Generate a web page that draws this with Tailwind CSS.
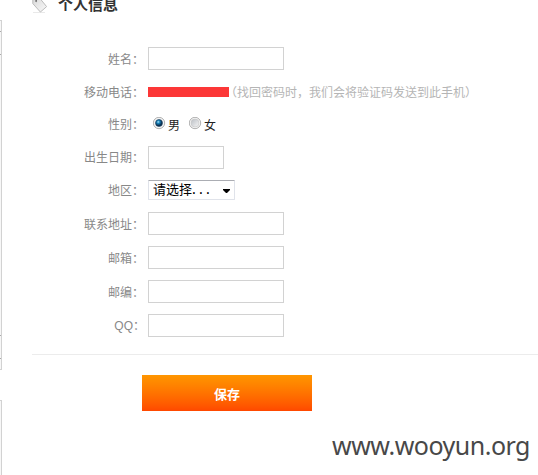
<!DOCTYPE html>
<html lang="zh-CN">
<head>
<meta charset="utf-8">
<title>个人信息</title>
<script src="https://cdn.jsdelivr.net/npm/@tailwindcss/browser@4"></script>
</head>
<body class="bg-white">
<div class="flex w-[538px] h-[475px] overflow-hidden relative font-['Liberation_Sans','Noto_Sans_CJK_SC',sans-serif] text-[12px] leading-[26px] text-[#888]">
  <aside class="w-[2px] shrink-0 pt-[20px] flex flex-col">
    <div class="h-[350px] border-t border-r border-b border-[#d2d2d2] bg-[#f7f7f7] pt-[10px]">
      <div class="h-[24px] border-y border-[#aaa]"></div>
      <div class="h-[280px]"></div>
      <div class="h-[24px] border-y border-[#aaa]"></div>
    </div>
    <div class="mt-[30px] flex-1 border-t border-r border-[#d2d2d2] bg-[#f7f7f7]"></div>
  </aside>
  <main class="ml-[30px] flex-1 flex flex-col">
    <header class="h-[47px] flex items-start">
      <svg class="w-[16px] h-[14px] shrink-0" viewBox="0 0 16 14">
        <defs><linearGradient id="tag" x1="0" y1="0" x2="1" y2="1"><stop offset="0" stop-color="#d8d8d8"/><stop offset="1" stop-color="#fafafa"/></linearGradient></defs>
        <path d="M1 12.500h12" stroke="#e9e9e9"/>
        <path d="M.8-2V3.600L8.400 12 14.600 6.600 8-1.500Z" fill="url(#tag)" stroke="#bcbcbc" stroke-linejoin="round"/>
        <path d="M3-.5Q5 0 3.800 1.800" fill="none" stroke="#555" stroke-width="1.200"/>
      </svg>
      <h1 class="ml-[10px] -mt-[7px] text-[15px] leading-[24px] font-bold text-[#333]">个人信息</h1>
    </header>
    <form class="flex flex-col">
      <div class="flex h-[23px]"><label class="w-[112px] mr-[4px] text-right">姓名：</label><input class="w-[136px] h-[23px] border border-[#d2d2d2] bg-white"></div>
      <div class="flex h-[23px] mt-[10px]"><label class="w-[112px] mr-[4px] text-right">移动电话：</label><span class="mt-[7px] w-[81px] h-[10px] bg-[#fc3737]"></span><span class="-ml-[4px] text-[#b5b5b5] whitespace-nowrap">（找回密码时，我们会将验证码发送到此手机）</span></div>
      <div class="flex h-[23px] mt-[9px] text-[#222]"><label class="w-[112px] mr-[4px] text-right text-[#888]">性别：</label>
        <svg class="w-[13px] h-[13px] ml-[5px] mt-[5px]" viewBox="0 0 13 13"><defs><radialGradient id="dot" cx=".4" cy=".35"><stop offset="0" stop-color="#a9e2fa"/><stop offset=".45" stop-color="#1681b8"/><stop offset="1" stop-color="#0b2f50"/></radialGradient></defs><circle cx="6" cy="6" r="5.700" fill="#f4f4f4" stroke="#a0a0a0" stroke-width=".8"/><circle cx="6" cy="6" r="3.500" fill="url(#dot)" stroke="#173c5c" stroke-width=".6"/></svg>
        <span class="ml-[2px] mt-[1px]">男</span>
        <svg class="w-[13px] h-[13px] ml-[9px] mt-[5px]" viewBox="0 0 13 13"><defs><linearGradient id="off" x1="0" y1="0" x2="1" y2="1"><stop offset="0" stop-color="#b9bec4"/><stop offset="1" stop-color="#f6f6f6"/></linearGradient></defs><circle cx="6" cy="6" r="5.700" fill="#f4f4f4" stroke="#a0a0a0" stroke-width=".8"/><circle cx="6" cy="6" r="4" fill="url(#off)" stroke="#c4c4c4" stroke-width=".6"/></svg>
        <span class="ml-[2px] mt-[1px]">女</span>
      </div>
      <div class="flex h-[23px] mt-[11px]"><label class="w-[112px] mr-[4px] text-right leading-[24px]">出生日期：</label><input class="w-[76px] h-[23px] border border-[#d2d2d2] bg-white"></div>
      <div class="flex h-[20px] mt-[11px] leading-[22px]"><label class="w-[112px] mr-[4px] text-right">地区：</label>
        <div class="w-[87px] h-[20px] border border-[#e0e3ea] border-t-[#abadb3] rounded-[1px] pl-[4px] pr-[4px] flex items-center justify-between text-black text-[13px] leading-[18px]"><span class="whitespace-nowrap">请选择<span class="-ml-[2px] font-['Liberation_Mono'] tracking-[-0.8px]">...</span></span><svg class="w-[7px] h-[4px] mt-[2px]" viewBox="0 0 7 4"><path d="M0 0h7v1L4 4H3L0 1Z" fill="#000"/></svg></div>
      </div>
      <div class="flex h-[23px] mt-[12px]"><label class="w-[112px] mr-[4px] text-right">联系地址：</label><input class="w-[136px] h-[23px] border border-[#d2d2d2] bg-white"></div>
      <div class="flex h-[23px] mt-[11px]"><label class="w-[112px] mr-[4px] text-right">邮箱：</label><input class="w-[136px] h-[23px] border border-[#d2d2d2] bg-white"></div>
      <div class="flex h-[23px] mt-[11px]"><label class="w-[112px] mr-[4px] text-right">邮编：</label><input class="w-[136px] h-[23px] border border-[#d2d2d2] bg-white"></div>
      <div class="flex h-[23px] mt-[11px] leading-[24px]"><label class="w-[113px] mr-[3px] text-right">QQ：</label><input class="w-[136px] h-[23px] border border-[#d2d2d2] bg-white"></div>
      <div class="mt-[17px] h-px bg-[#ececec]"></div>
      <button type="button" class="mt-[20px] ml-[110px] w-[170px] h-[36px] pt-[4px] bg-linear-to-b from-[#ff9600] to-[#ff4800] text-white font-bold text-[13px] leading-[32px]">保存</button>
    </form>
  </main>
  <div class="absolute left-[332px] top-[429px] text-[25px] leading-[32px] tracking-[-0.5px] text-[#484848] whitespace-nowrap font-['Noto_Sans',sans-serif]">www.wooyun.org</div>
</div>
</body>
</html>
